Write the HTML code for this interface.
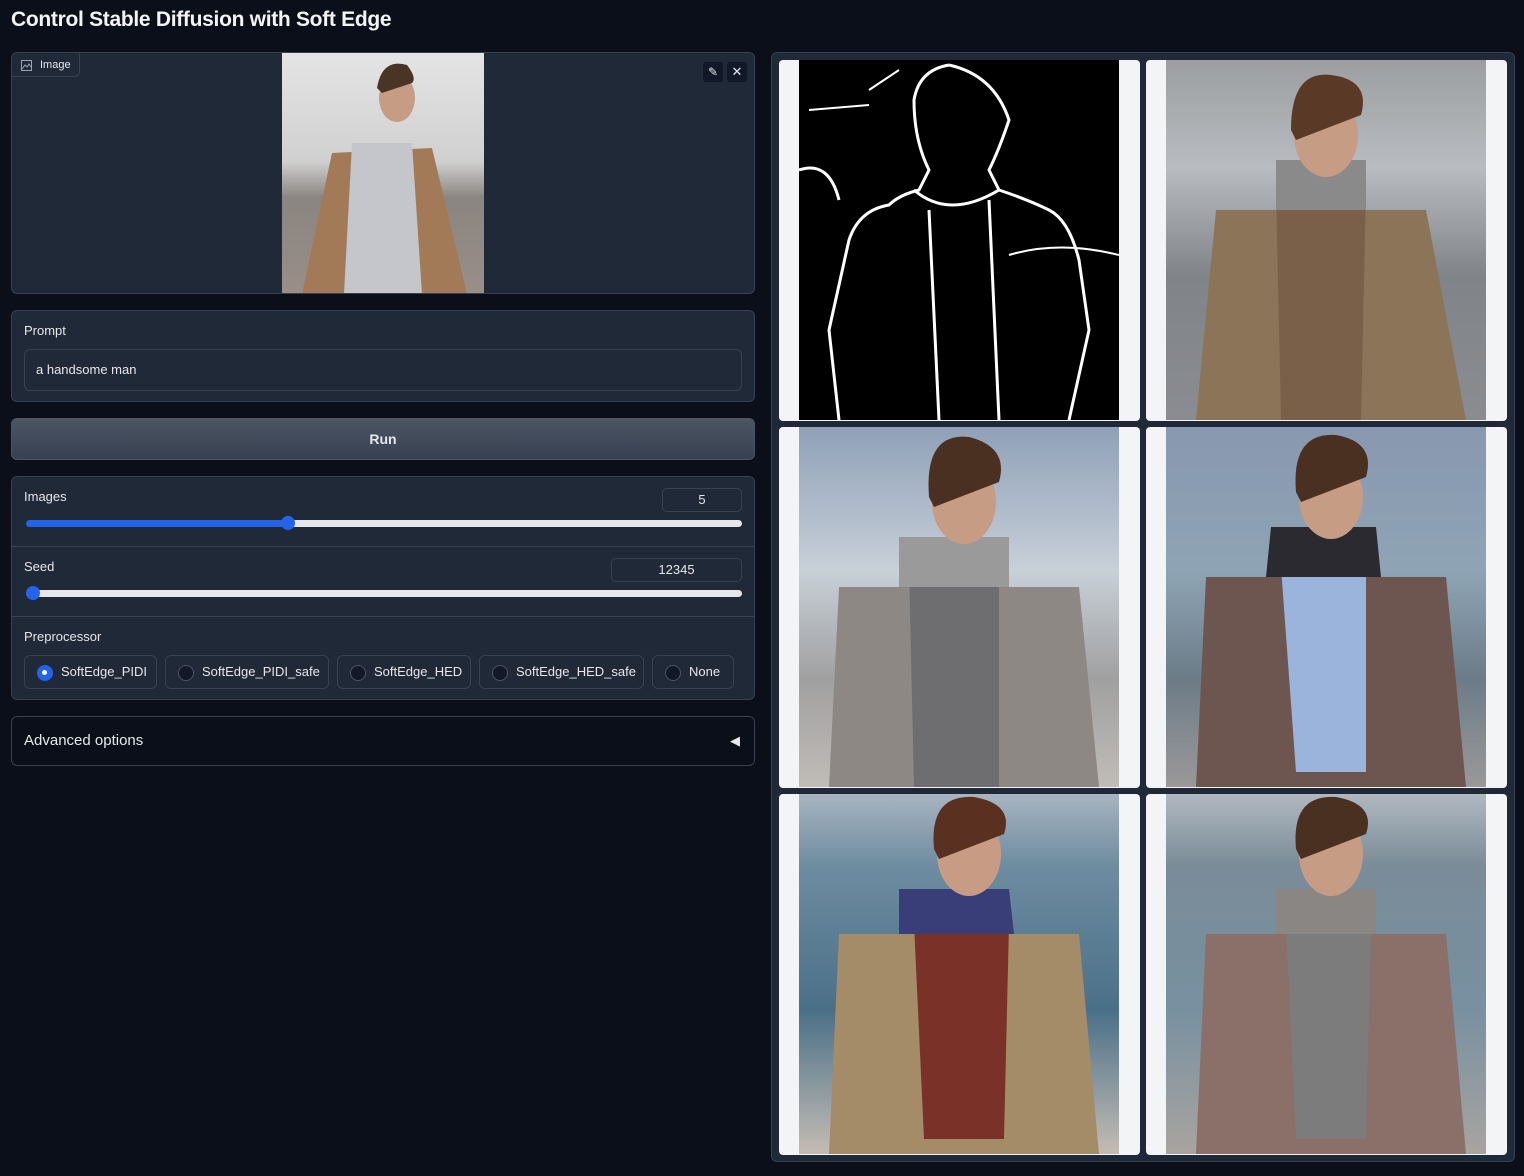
<!DOCTYPE html>
<html><head><meta charset="utf-8"><style>
*{box-sizing:border-box;margin:0;padding:0}
body{width:1524px;height:1176px;background:#0b0f19;font-family:"Liberation Sans",sans-serif;color:#e5e7eb;position:relative;overflow:hidden}
.a{position:absolute}
.blk{background:#1f2937;border:1px solid #374151;border-radius:6px}
.lbl{font-size:13px;color:#e5e7eb}
.num{border:1px solid #374151;border-radius:5px;background:#1f2937;font-size:13px;text-align:center;line-height:22px;height:24px}
.track{height:7px;border-radius:4px;background:#e5e7eb}
.thumb{width:14px;height:14px;border-radius:50%;background:#2563eb;top:-4px}
.rad{top:655px;height:34px;border:1px solid #374151;border-radius:6px;background:#1f2937;font-size:13px;line-height:32px;padding-left:36px}
.rad:before{content:"";position:absolute;left:12px;top:9px;width:14px;height:14px;border-radius:50%;border:1px solid #4b5563;background:#111827}
.rad.on:before{background:#2563eb;border-color:#2563eb;box-shadow:inset 0 0 0 4px #2563eb}
.rad.on:after{content:"";position:absolute;left:17px;top:14px;width:5px;height:5px;border-radius:50%;background:#fff}
.cell{background:#f3f4f6;border-radius:4px;width:361px;height:361px;padding:0 20px}
.cell svg{display:block;width:320px;height:360px}
</style></head><body>
<div class="a" style="left:11px;top:8px;font-size:21px;letter-spacing:-0.3px;font-weight:bold;color:#f3f4f6">Control Stable Diffusion with Soft Edge</div>

<div class="a blk" style="left:11px;top:52px;width:744px;height:242px;overflow:hidden">
 <div class="a" style="left:0;top:0;height:24px;width:68px;border-right:1px solid #374151;border-bottom:1px solid #374151;border-radius:0 0 6px 0;font-size:11px;line-height:24px;padding-left:28px">Image</div>
 <svg class="a" style="left:9px;top:7px" width="11" height="11" viewBox="0 0 11 11" fill="none" stroke="#9ca3af"><rect x=".5" y=".5" width="10" height="10"/><path d="M1 9l3-4 2 2 2-3 2 3"/></svg>
 <svg class="a" style="left:270px;top:0" width="202" height="241" viewBox="0 0 202 241">
  <defs><linearGradient id="s0" x1="0" y1="0" x2="0" y2="1"><stop offset="0" stop-color="#e4e4e4"/><stop offset=".45" stop-color="#d0d0d0"/><stop offset=".6" stop-color="#8a8580"/><stop offset="1" stop-color="#9a8e88"/></linearGradient></defs>
  <rect width="202" height="241" fill="url(#s0)"/>
  <path d="M50 100 L150 95 L185 241 L20 241Z" fill="#a27a58"/>
  <path d="M70 90 L130 90 L140 241 L62 241Z" fill="#c4c6cc"/>
  <ellipse cx="115" cy="45" rx="18" ry="24" fill="#c69c84"/>
  <path d="M95 35 Q100 5 125 12 Q135 25 130 30 L100 40Z" fill="#4a3426"/>
 </svg>
 <div class="a" style="left:691px;top:9px;width:20px;height:20px;background:#111827;border-radius:3px;color:#e5e7eb;font-size:12px;text-align:center;line-height:20px">✎</div>
 <div class="a" style="left:715px;top:9px;width:20px;height:20px;background:#111827;border-radius:3px;color:#e5e7eb;font-size:13px;text-align:center;line-height:20px">✕</div>
</div>

<div class="a blk" style="left:11px;top:310px;width:744px;height:92px">
 <div class="a lbl" style="left:12px;top:12px">Prompt</div>
 <div class="a" style="left:12px;top:38px;width:718px;height:42px;border:1px solid #374151;border-radius:6px;background:#1f2937;font-size:13px;line-height:40px;padding-left:11px">a handsome man</div>
</div>

<div class="a" style="left:11px;top:418px;width:744px;height:42px;border-radius:6px;background:linear-gradient(#4b5563,#374151);border:1px solid #4b5563;text-align:center;line-height:40px;font-weight:bold;font-size:14px">Run</div>

<div class="a blk" style="left:11px;top:476px;width:744px;height:224px">
 <div class="a lbl" style="left:12px;top:12px">Images</div>
 <div class="a num" style="left:650px;top:11px;width:80px">5</div>
 <div class="a track" style="left:14px;top:43px;width:716px;background:linear-gradient(90deg,#2563eb 0,#2563eb 263px,#e5e7eb 263px)"><div class="a thumb" style="left:255px"></div></div>
 <div class="a" style="left:0;top:69px;width:742px;border-top:1px solid #374151"></div>
 <div class="a lbl" style="left:12px;top:82px">Seed</div>
 <div class="a num" style="left:599px;top:81px;width:131px">12345</div>
 <div class="a track" style="left:14px;top:113px;width:716px"><div class="a thumb" style="left:0"></div></div>
 <div class="a" style="left:0;top:139px;width:742px;border-top:1px solid #374151"></div>
 <div class="a lbl" style="left:12px;top:152px">Preprocessor</div>
</div>
<div class="a rad on" style="left:24px;width:133px">SoftEdge_PIDI</div>
<div class="a rad" style="left:165px;width:164px">SoftEdge_PIDI_safe</div>
<div class="a rad" style="left:337px;width:134px">SoftEdge_HED</div>
<div class="a rad" style="left:479px;width:165px">SoftEdge_HED_safe</div>
<div class="a rad" style="left:652px;width:82px">None</div>

<div class="a" style="left:11px;top:716px;width:744px;height:50px;border:1px solid #374151;border-radius:6px;font-size:15px;line-height:48px;padding-left:12px">Advanced options<span class="a" style="right:14px;top:0;font-size:13px">◀</span></div>

<div class="a blk" style="left:771px;top:52px;width:744px;height:1110px"></div>

<div class="a cell" style="left:779px;top:60px"><svg viewBox="0 0 320 360"><rect width="320" height="360" fill="#000"/><g fill="none" stroke="#fff" stroke-width="3"><path d="M150 5 Q120 10 115 40 Q115 80 130 110 L120 130 Q100 135 90 145 Q60 150 50 180 L30 270 L40 360"/><path d="M150 5 Q195 15 210 60 Q200 90 190 110 L200 130 Q230 140 250 150 Q270 160 280 200 L290 270 L270 360"/><path d="M115 130 Q150 160 200 130"/><path d="M130 150 L140 360"/><path d="M190 140 L200 360"/><path d="M0 110 Q30 100 40 140"/><path d="M210 195 Q260 180 320 195" stroke-width="2"/><path d="M10 50 L70 45 M70 30 L100 10" stroke-width="2"/></g></svg></div>

<div class="a cell" style="left:1146px;top:60px"><svg viewBox="0 0 320 360"><defs>
<linearGradient id="bg1" x1="0" y1="0" x2="0" y2="1"><stop offset="0" stop-color="#9c9ea0"/><stop offset=".3" stop-color="#b8bcc0"/><stop offset=".6" stop-color="#808488"/><stop offset="1" stop-color="#8a8c90"/></linearGradient></defs>
<rect width="320" height="360" fill="url(#bg1)"/><path d="M50 150 L260 150 L300 360 L30 360Z" fill="#8c7458"/><path d="M110 130 L200 130 L195 360 L115 360Z" fill="#7a6048"/><path d="M110 100 L200 100 L200 150 L110 150Z" fill="#8a8a8a"/><ellipse cx="160" cy="75" rx="32" ry="42" fill="#c69c84"/><path d="M125 70 Q125 10 165 15 Q205 20 195 55 L130 80Z" fill="#5a3a26"/></svg></div>

<div class="a cell" style="left:779px;top:427px"><svg viewBox="0 0 320 360"><defs><linearGradient id="bg2" x1="0" y1="0" x2="0" y2="1"><stop offset="0" stop-color="#8fa0b8"/><stop offset=".4" stop-color="#c8d0d8"/><stop offset=".7" stop-color="#a0a0a0"/><stop offset="1" stop-color="#c0bcb8"/></linearGradient></defs><rect width="320" height="360" fill="url(#bg2)"/><path d="M40 160 L280 160 L300 360 L30 360Z" fill="#8e8884"/><path d="M110 140 L200 140 L200 360 L115 360Z" fill="#6e6e70"/><path d="M100 110 L210 110 L210 160 L100 160Z" fill="#9a9a9a"/><ellipse cx="165" cy="75" rx="32" ry="42" fill="#c69c84"/><path d="M130 70 Q125 5 170 10 Q210 20 200 55 L135 80Z" fill="#4a3020"/></svg></div>

<div class="a cell" style="left:1146px;top:427px"><svg viewBox="0 0 320 360"><defs><linearGradient id="bg3" x1="0" y1="0" x2="0" y2="1"><stop offset="0" stop-color="#8898b0"/><stop offset=".4" stop-color="#8ea4b4"/><stop offset=".7" stop-color="#6c7c88"/><stop offset="1" stop-color="#9a9898"/></linearGradient></defs><rect width="320" height="360" fill="url(#bg3)"/><path d="M40 150 L280 150 L300 360 L30 360Z" fill="#6e5650"/><path d="M115 140 L200 140 L200 345 L130 345Z" fill="#9ab4dc"/><path d="M105 100 L210 100 L215 150 L100 150Z" fill="#2a2a30"/><ellipse cx="165" cy="70" rx="32" ry="42" fill="#c69c84"/><path d="M130 65 Q125 5 170 8 Q210 15 200 50 L135 75Z" fill="#4a3020"/></svg></div>

<div class="a cell" style="left:779px;top:794px"><svg viewBox="0 0 320 360"><defs><linearGradient id="bg4" x1="0" y1="0" x2="0" y2="1"><stop offset="0" stop-color="#a8b4c0"/><stop offset=".2" stop-color="#6e8ca0"/><stop offset=".6" stop-color="#4a7088"/><stop offset="1" stop-color="#c4bcb4"/></linearGradient></defs><rect width="320" height="360" fill="url(#bg4)"/><path d="M40 140 L280 140 L300 360 L30 360Z" fill="#a48c68"/><path d="M115 130 L210 130 L205 345 L125 345Z" fill="#7a3228"/><path d="M100 95 L210 95 L215 140 L100 140Z" fill="#3a3e78"/><ellipse cx="170" cy="60" rx="32" ry="42" fill="#c89c84"/><path d="M135 55 Q130 0 175 3 Q215 10 205 40 L140 65Z" fill="#5a3020"/></svg></div>

<div class="a cell" style="left:1146px;top:794px"><svg viewBox="0 0 320 360"><defs><linearGradient id="bg5" x1="0" y1="0" x2="0" y2="1"><stop offset="0" stop-color="#b0b8c0"/><stop offset=".2" stop-color="#7a8c98"/><stop offset=".6" stop-color="#7890a0"/><stop offset="1" stop-color="#a8a4a0"/></linearGradient></defs><rect width="320" height="360" fill="url(#bg5)"/><path d="M40 140 L280 140 L300 360 L30 360Z" fill="#8a7068"/><path d="M120 130 L205 130 L200 345 L130 345Z" fill="#7c7c7c"/><path d="M110 95 L210 95 L210 140 L110 140Z" fill="#8a8684"/><ellipse cx="165" cy="60" rx="32" ry="42" fill="#c69c84"/><path d="M130 55 Q125 0 170 3 Q210 10 200 40 L135 65Z" fill="#4a3020"/></svg></div>
</body></html>
